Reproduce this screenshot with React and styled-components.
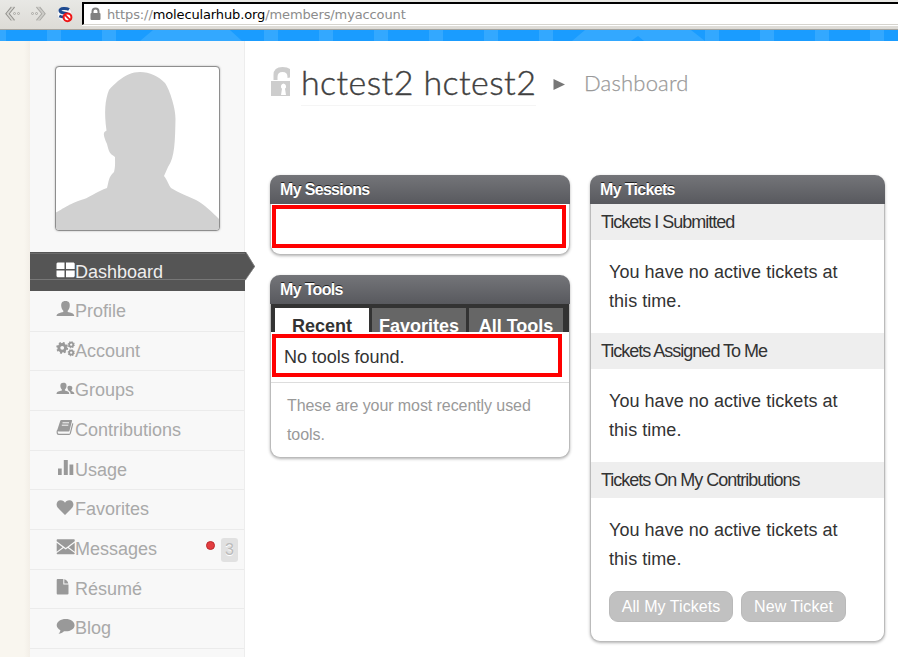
import React from "react";
import styled, { createGlobalStyle, css } from "styled-components";

const Global = createGlobalStyle`
  * { box-sizing: border-box; }
  body { margin: 0; background: #fff; overflow: hidden; font-family: "Liberation Sans", Arial, sans-serif; }
  h1, h2, h3, p, ul { margin: 0; padding: 0; font-weight: normal; }
`;

const Page = styled.div`
  width: 898px;
  height: 657px;
  overflow: hidden;
  display: flex;
  flex-direction: column;
`;

const Toolbar = styled.header`
  height: 30px;
  flex: none;
  display: flex;
  background: linear-gradient(#e8e8e5, #dddbd6);
  border-bottom: 1px solid #a5a39e;
`;

const ToolIcons = styled.div`
  width: 82px;
  height: 29px;
  flex: none;
  svg { display: block; }
`;

const AddressBar = styled.div`
  flex: 1;
  height: 23px;
  margin-top: 2px;
  display: flex;
  align-items: center;
  background: #fff;
  border-top: 2px solid #000;
  border-left: 2px solid #000;
  border-bottom: 1px solid #d6d4ce;
  box-shadow: 0 1px #fff;
  padding: 0 0 0 6px;
  > svg { margin-bottom: 1px; }
`;

const Url = styled.span`
  margin-left: 6px;
  padding-top: 1px;
  font: 13px/18px "DejaVu Sans", sans-serif;
  letter-spacing: -0.12px;
  color: #8c8c8c;
  white-space: pre;
  b { font-weight: normal; color: #000; }
`;

const Band = styled.svg`
  display: block;
  flex: none;
`;

const Body = styled.div`
  flex: 1;
  min-height: 0;
  display: grid;
  grid-template-columns: 30px 215px 1fr;
`;

const Gutter = styled.div`
  background: linear-gradient(90deg, #f9f6ef 24px, #f3efe8);
`;

const Sidebar = styled.aside`
  background: #f8f8f8;
  border-right: 1px solid #ededed;
  padding-top: 25px;
`;

const Avatar = styled.div`
  width: 165px;
  height: 165px;
  margin-left: 25px;
  border: 1px solid #8e8e8e;
  border-radius: 4px;
  background: #fff;
  box-shadow: 0 0 2px #aaa;
  overflow: hidden;
  svg { display: block; }
`;

const Nav = styled.ul`
  list-style: none;
  margin-top: 21px;
`;

const NavItem = styled.li`
  height: 39.672px;
  display: flex;
  border-bottom: 1px solid #ebebeb;
  padding-left: 26px;
  color: #a9a9a9;
  font-size: 18px;
  line-height: 39px;
  > svg { flex: none; margin-top: 8px; color: #999; }
  ${(p) => p.$active && css`
    position: relative;
    width: 215px;
    height: 39px;
    margin-bottom: 0.86px;
    border: 0;
    line-height: 40px;
    color: #eee;
    background: linear-gradient(#555 1px, #6c6c6c 1px 2px, #555 2px 27px, #777 27px 28px, #555 28px);
    > svg { color: #fff; }
  `}
`;

const ActiveTip = styled.div`
  position: absolute;
  left: 215px;
  top: 0;
  svg { display: block; }
`;

const Notice = styled.span`
  width: 9px;
  height: 9px;
  margin: 11px 6px 0 auto;
  border: 1px solid #bd292d;
  border-radius: 50%;
  background: #e33d40;
`;

const Count = styled.span`
  width: 17px;
  height: 24px;
  margin: 8px 6px 0 0;
  border-radius: 3px;
  background: #e1e1e1;
  color: #bbb;
  text-shadow: 0 1px #fff;
  font-size: 16px;
  line-height: 24px;
  text-align: center;
`;

const Main = styled.main`
  padding-left: 25px;
`;

const TitleRow = styled.div`
  height: 134px;
  padding-top: 23px;
  display: flex;
  align-items: flex-start;
  font-family: Lato, sans-serif;
  font-weight: 300;
  > svg { flex: none; }
`;

const Title = styled.h1`
  height: 42px;
  margin-left: 9px;
  width: 235px;
  border-bottom: 1px solid #f5f5f5;
  font-size: 34px;
  font-weight: 300;
  line-height: 36px;
  letter-spacing: 0.42px;
  color: #404040;
  -webkit-text-stroke: 0.4px #404040;
  white-space: nowrap;
`;

const Arrow = styled.svg`
  margin: 15px 0 0 17px;
`;

const Crumb = styled.span`
  margin-left: 19px;
  font-size: 22px;
  line-height: 38px;
  letter-spacing: 0.2px;
  color: #999;
  -webkit-text-stroke: 0.25px #999;
`;

const Columns = styled.div`
  display: grid;
  grid-template-columns: 300px 295px;
  column-gap: 20px;
  align-items: start;
`;

const Stack = styled.div`
  display: flex;
  flex-direction: column;
  gap: 20px;
`;

const Panel = styled.section`
  height: ${(p) => p.$height}px;
  border-radius: 10px;
  background: #fff;
  border: 1px solid #bbb;
  border-top: 0;
  box-shadow: 0 1px 3px rgba(0, 0, 0, 0.3);
`;

const PanelTitle = styled.h2`
  height: 29px;
  margin: 0 -1px;
  padding-left: 10px;
  border-radius: 10px 10px 0 0;
  background: linear-gradient(#747579, #58595e);
  color: #fff;
  font-size: 16px;
  font-weight: bold;
  line-height: 29px;
  letter-spacing: -0.67px;
  text-shadow: 0 -1px #222;
`;

const Highlight = styled.div`
  width: ${(p) => p.$width}px;
  height: 43px;
  margin: ${(p) => p.$top}px 0 0 1px;
  border: 4px solid #f00;
  padding-left: 8px;
  font-size: 18px;
  line-height: 39px;
  letter-spacing: -0.05px;
  color: #333;
`;

const Tabs = styled.div`
  height: 28px;
  padding: 4px 4px 0;
  display: flex;
  gap: 3px;
  overflow: hidden;
  background: #333;
`;

const Tab = styled.div`
  width: 94px;
  line-height: 36px;
  text-align: center;
  font-size: 18px;
  font-weight: bold;
  white-space: nowrap;
  color: ${(p) => (p.$active ? "#333" : "#fff")};
  background: ${(p) => (p.$active ? "#fff" : "#666")};
`;

const Hint = styled.p`
  margin-top: 5px;
  padding: 8px 16px;
  border-top: 1px solid #ddd;
  font-size: 16px;
  line-height: 29px;
  letter-spacing: -0.08px;
  color: #999;
`;

const TicketHeading = styled.h3`
  height: 36px;
  padding-left: 10px;
  background: #eee;
  font-size: 18px;
  line-height: 36px;
  letter-spacing: -1px;
  color: #333;
`;

const TicketText = styled.p`
  height: 93px;
  padding: 18px 18px 0;
  font-size: 18px;
  line-height: 29px;
  letter-spacing: 0.04px;
  color: #333;
`;

const Buttons = styled.div`
  display: flex;
  gap: 8px;
  padding-left: 18px;
`;

const Button = styled.button`
  width: ${(p) => p.$width}px;
  height: 31px;
  padding: 0;
  border: 1px solid #b9b9b9;
  border-radius: 9px;
  background: #c1c1c1;
  color: #fff;
  font: 16px/29px "Liberation Sans", Arial, sans-serif;
  letter-spacing: 0.06px;
`;

const gear = (cx, cy, r) => (
  <>
    <circle cx={cx} cy={cy} r={r * 0.58} fill="none" stroke="currentColor" strokeWidth={r * 0.5} />
    <circle cx={cx} cy={cy} r={r * 0.87} fill="none" stroke="currentColor" strokeWidth={r * 0.3}
      strokeDasharray={`${(r * 0.87 * Math.PI) / 8}`} />
  </>
);

const icons = {
  Dashboard: <path d="M1.500 2.500h7v6.500H.5V3.500zM10 2.500h7.700l1 1V9H10zM.5 10.400h8v6.800h-7l-1-1zM10 10.400h8.700v5.800l-1 1H10z" />,
  Profile: <path d="M9.500 1C6 1 4.900 3.200 5.300 6.500c.3 2.200 1 3.200 2 4.200v1.300C4.200 13 .8 12.900.5 16h17.800c-.3-3.100-3.500-3.100-6.600-4v-1.300c1-1 1.700-2 2-4.200C14.100 3.200 13 1 9.500 1z" />,
  Account: <>{gear(6.2, 7.800, 5.8)}{gear(15.2, 4.700, 3.500)}{gear(15.200, 12.700, 3.500)}</>,
  Groups: (
    <>
      <path d="M7.500 3.800C4.800 3.800 4.200 5.500 4.400 7.500c.2 1.600.8 2.300 1.500 2.900v1.200C3.300 12.300.8 12.400.5 14.900h12.800c-.3-2.500-2.100-2.600-4.400-3.300v-1.200c.8-.6 1.400-1.300 1.600-2.900C10.700 5.500 10.200 3.800 7.500 3.800z" />
      <path d="M13.500 6.800c-1.800 0-2.300 1.200-1.900 2.800.2.700.4 1.200.9 1.600v.5c1.300.5 2 1.400 2.200 3.200h3.700c-.2-2-1.500-2.400-3-2.900v-.8c.5-.4.8-1 .9-1.800.2-1.500-.3-2.600-2.800-2.600z" />
    </>
  ),
  Contributions: (
    <>
      <path d="M5.500 1h9.700c.7 0 1 .5.8 1.100L13.500 11.700c-.2.6-.6.9-1.200.9H2.500L1.200 11.300 4.200 2c.2-.6.600-1 1.300-1z" />
      <path d="M1.600 11c-1 2.700-.2 4.400 1.200 4.400h10.300c.6 0 1-.4 1.200-1L16.800 4.400" fill="none" stroke="currentColor" strokeWidth="1.200" />
      <path d="M6.500 3.800h6.500M5.800 6.200h6.500" stroke="#f8f8f8" strokeWidth="1" />
    </>
  ),
  Usage: <path d="M2 9.500h3.700V16H2zM7.800 1h4v15h-4zM13.500 5.500h3.800V16h-3.800z" />,
  Favorites: <path d="M9 17L1.800 9.800C-.5 7.300.5 2.300 4.700 2.300c2.100 0 3.600 1.200 4.300 2.500.7-1.300 2.200-2.500 4.300-2.500 4.200 0 5.200 5 2.900 7.500z" />,
  Messages: (
    <>
      <path d="M1.700 1.300h16c.6 0 1 .4 1 1v1L9.700 9.900.7 3.300v-1c0-.6.4-1 1-1z" />
      <path d="M.7 4.700l5.900 4.500L.7 13.800zM18.700 4.700l-5.900 4.500 5.900 4.600zM7.600 10l2.100 1.500 2.100-1.500 6.900 5v.3c0 .6-.4 1-1 1h-16c-.6 0-1-.4-1-1V15z" />
    </>
  ),
  Résumé: <path d="M1.500 1h5.800v5.600h5.200v8.900c0 .5-.4.900-.9.900H1.600c-.5 0-.9-.4-.9-.9V1.900c0-.5.3-.9.800-.9zM8.300 1.200c1.800.3 3.800 2.200 4 4.200h-4z" />,
  Blog: <path d="M9.700 2C4.800 2 .7 4.700.7 8.200c0 2.100 1.500 3.900 3.700 5-.2 1.400-.8 2.600-1.900 3.500 2.200-.2 4.100-1.100 5.500-2.500.6.100 1.100.1 1.700.1 5 0 8.900-2.600 8.900-6.100S14.700 2 9.700 2z" />,
};

const Icon = ({ name }) => (
  <svg width="19" height="18" viewBox="0 0 19 18" fill="currentColor">{icons[name]}</svg>
);

const stripes = [-8, 47, 102, 264, 319, 374, 429, 484, 539, 705, 760, 815, 870];

export default function App() {
  return (
    <>
      <Global />
      <Page>
        <Toolbar>
          <ToolIcons>
            <svg width="82" height="29" fill="none" stroke="#aaa9a5">
              <path d="M11.500 7L6 13.700l5.500 6.700M14.500 7L9 13.700l5.500 6.700" stroke="#94938f" strokeWidth="1.300" />
              <path d="M13 7L7.500 13.700l5.500 6.700" stroke="#d4d3cf" strokeWidth="1.600" />
              <circle cx="14.500" cy="13.500" r="1" /><circle cx="18.500" cy="13.500" r="1" />
              <path d="M36.500 7l5.500 6.700-5.500 6.700M39.500 7l5.500 6.700-5.500 6.700" stroke="#aaa9a5" strokeWidth="1.300" />
              <path d="M38 7l5.500 6.700-5.500 6.700" stroke="#cccbc7" strokeWidth="1.600" />
              <circle cx="32.500" cy="13.500" r="1" /><circle cx="36.500" cy="13.500" r="1" />
              <circle cx="64.500" cy="14" r="7.500" fill="#f8f8f8" stroke="#ddd" />
              <path d="M69 9.500c-2.500-1.500-9-1.700-9 1.300 0 3.200 8 1 8 4 0 2.500-5.200 2.800-8.700 1.200" stroke="#1e4a90" strokeWidth="3" />
              <circle cx="67.500" cy="17.300" r="3.900" fill="#fff" stroke="#ee1717" strokeWidth="2" />
              <path d="M65 14.800l5 5" stroke="#ee1717" strokeWidth="1.800" />
            </svg>
          </ToolIcons>
          <AddressBar>
            <svg width="11" height="14" viewBox="0 0 11 14">
              <path d="M2.500 7V4.500a3 3 0 016 0V7" fill="none" stroke="#808080" strokeWidth="2" />
              <rect x=".5" y="6" width="10" height="7" rx="1" fill="#808080" />
            </svg>
            <Url>https://<b>molecularhub.org</b>/members/myaccount</Url>
          </AddressBar>
        </Toolbar>
        <Band width="898" height="11">
          <rect width="898" height="11" fill="#1a9cff" />
          <g fill="#33a8ff">
            {stripes.map((x) => <rect key={x} x={x} width="14" height="11" />)}
            <path d="M153 0h77l12 11H140zM585 0h106l14 11H572z" />
          </g>
          <path d="M631 11l7-5 6 5z" fill="#1a9cff" />
        </Band>
        <Body>
          <Gutter />
          <Sidebar>
            <Avatar>
              <svg width="163" height="163" viewBox="0 0 163 163">
                <path fill="#d1d1d1" d="M0 145.500C7 142 9 139 25 133C31 132 42 124 51 121C53 114 52 111 58 105C59.500 99 59 96 59 90C53 86 53 85 51 77C47 68 47 65 50 64L50.500 63.500C48 45 49 33 53 23C55 20 59 17 62 14C70 8 76 5 84 5C94 5 102 9 109 16C114 23 120 43 119.500 52C119 74 119 90 112 100L108 109C112 114 112 117 115 121C123 126 132 129 140 133C148 137 156 145 163 152V163H0Z" />
              </svg>
            </Avatar>
            <Nav>
              {Object.keys(icons).map((name) => (
                <NavItem key={name} $active={name === "Dashboard"}>
                  <Icon name={name} />
                  {name}
                  {name === "Messages" && <><Notice /><Count>3</Count></>}
                  {name === "Dashboard" && (
                    <ActiveTip>
                      <svg width="11" height="29">
                        <path d="M0 0h1l9 14.500L0 28.500z" fill="#555" />
                        <path d="M1 .5l8.500 14L.5 28" fill="none" stroke="#888" strokeWidth=".7" />
                      </svg>
                    </ActiveTip>
                  )}
                </NavItem>
              ))}
            </Nav>
          </Sidebar>
          <Main>
            <TitleRow>
              <svg width="22" height="34" viewBox="0 0 22 34">
                <path d="M3.500 16V11Q3.500 3 12.500 3q5 0 7.500 2v8.500l-2.500.5v-1q0-5-5-5t-5 5v3z" fill="#cdcdcd" />
                <path fillRule="evenodd" d="M1 17h19v15H1zM13.500 19.500a3 3 0 00-1.500 5.300l-1 6.200h5l-1-6.200a3 3 0 00-1.500-5.300z" fill="#cdcdcd" />
              </svg>
              <Title>hctest2 hctest2</Title>
              <Arrow width="12" height="12"><path d="M.5 0v11L12 5.500z" fill="#777" /></Arrow>
              <Crumb>Dashboard</Crumb>
            </TitleRow>
            <Columns>
              <Stack>
                <Panel $height={80}>
                  <PanelTitle>My Sessions</PanelTitle>
                  <Highlight $width={294} $top={1} />
                </Panel>
                <Panel $height={183}>
                  <PanelTitle>My Tools</PanelTitle>
                  <Tabs>
                    <Tab $active>Recent</Tab>
                    <Tab>Favorites</Tab>
                    <Tab>All Tools</Tab>
                  </Tabs>
                  <Highlight $width={290} $top={2}>No tools found.</Highlight>
                  <Hint>These are your most recently used tools.</Hint>
                </Panel>
              </Stack>
              <Panel $height={467}>
                <PanelTitle>My Tickets</PanelTitle>
                {["Tickets I Submitted", "Tickets Assigned To Me", "Tickets On My Contributions"].map((t) => (
                  <React.Fragment key={t}>
                    <TicketHeading>{t}</TicketHeading>
                    <TicketText>You have no active tickets at this time.</TicketText>
                  </React.Fragment>
                ))}
                <Buttons>
                  <Button $width={124}>All My Tickets</Button>
                  <Button $width={105}>New Ticket</Button>
                </Buttons>
              </Panel>
            </Columns>
          </Main>
        </Body>
      </Page>
    </>
  );
}
